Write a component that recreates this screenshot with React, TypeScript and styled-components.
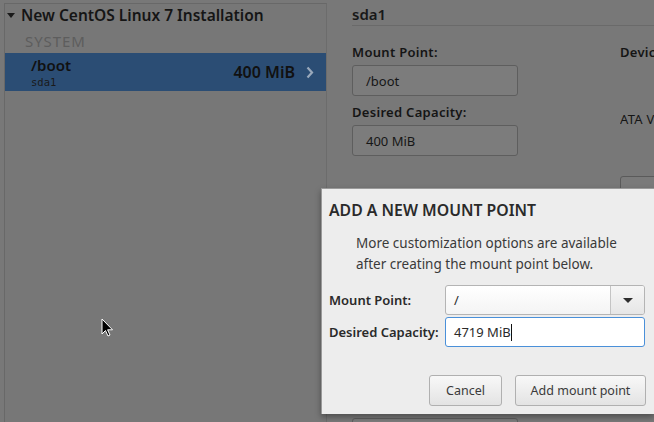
import React from "react";
import styled, { createGlobalStyle } from "styled-components";

const GlobalStyle = createGlobalStyle`
  html, body {
    margin: 0;
    padding: 0;
    background: #787878;
    overflow: hidden;
  }
  body {
    font-family: "Noto Sans", "Open Sans", sans-serif;
    color: #1c1c1c;
  }
`;

const Page = styled.div`
  position: relative;
  display: flex;
  width: 654px;
  height: 422px;
  background: #787878;
  overflow: hidden;
`;

const LeftPane = styled.div`
  flex-shrink: 0;
  width: 321px;
  margin: 3px 0 0 4px;
  border-left: 1px solid #686868;
  border-top: 1px solid #686868;
  border-right: 1px solid #6c6c6c;
  background: #777777;
  display: flex;
  flex-direction: column;
`;

const TreeHeader = styled.div`
  display: flex;
  align-items: center;
  gap: 6px;
  height: 22px;
  padding: 0 0 0 2px;
  font-size: 15.5px;
  font-weight: 600;
  color: #151515;
`;

const Caret = styled.span`
  width: 0;
  height: 0;
  border-left: 4px solid transparent;
  border-right: 4px solid transparent;
  border-top: 5px solid #1a1a1a;
`;

const SectionLabel = styled.div`
  padding: 5px 0 0 20px;
  height: 23px;
  box-sizing: border-box;
  font-size: 15px;
  color: #5d5d5d;
  letter-spacing: 0.9px;
`;

const SelectedRow = styled.div`
  display: flex;
  align-items: center;
  height: 38px;
  margin-top: 4px;
  padding: 0 12px 0 26px;
  background: #2b4d74;
`;

const RowNames = styled.div`
  flex: 1;
  display: flex;
  flex-direction: column;
`;

const RowTitle = styled.span`
  font-size: 15px;
  font-weight: 600;
  color: #111;
  line-height: 19px;
`;

const RowDevice = styled.span`
  font-family: "DejaVu Sans Mono", "Liberation Mono", monospace;
  font-size: 10.5px;
  color: #1a1a1a;
  line-height: 14px;
`;

const RowSize = styled.span`
  font-size: 16px;
  font-weight: 600;
  color: #111;
  margin-right: 11px;
`;

const RightPane = styled.div`
  flex: 1;
  min-width: 0;
  padding: 3px 0 0 25px;
  display: flex;
  flex-direction: column;
`;

const DeviceTitle = styled.div`
  font-size: 15px;
  font-weight: 600;
  color: #181818;
  height: 27px;
  border-bottom: 1px solid #6a6a6a;
  box-sizing: border-box;
  line-height: 22px;
`;

const FieldColumns = styled.div`
  display: grid;
  grid-template-columns: 268px 1fr;
  padding-top: 17px;
`;

const Column = styled.div`
  display: flex;
  flex-direction: column;
  overflow: hidden;
`;

const FieldLabel = styled.div<{ $gap?: number }>`
  font-size: 13px;
  font-weight: 600;
  color: #151515;
  height: 18px;
  line-height: 18px;
  letter-spacing: 0.3px;
  white-space: nowrap;
  margin-top: ${(p) => p.$gap ?? 0}px;
`;

const PlainText = styled.div<{ $gap?: number }>`
  font-size: 13px;
  color: #151515;
  letter-spacing: 0.3px;
  white-space: nowrap;
  margin-top: ${(p) => p.$gap ?? 0}px;
`;

const DimInput = styled.div<{ $gap?: number }>`
  width: 166px;
  height: 31px;
  margin-top: ${(p) => p.$gap ?? 4}px;
  box-sizing: border-box;
  border: 1px solid #5e5e5e;
  border-radius: 3px;
  background: #7c7c7c;
  padding: 0 13px;
  display: flex;
  align-items: center;
  font-size: 13px;
  color: #161616;
`;

const DimButton = styled.div<{ $w: number; $gap: number }>`
  width: ${(p) => p.$w}px;
  height: 30px;
  margin-top: ${(p) => p.$gap}px;
  box-sizing: border-box;
  border: 1px solid #5a5a5a;
  border-radius: 3px;
  background: #7a7a7a;
`;

const Dialog = styled.div`
  position: absolute;
  left: 321px;
  top: 188px;
  width: 333px;
  height: 226px;
  box-sizing: border-box;
  background: #ededed;
  border-left: 1px solid #9a9a9a;
  border-top: 1px solid #9a9a9a;
  box-shadow: 0 3px 6px rgba(0, 0, 0, 0.35);
  padding: 11px 8px 0 7px;
  display: flex;
  flex-direction: column;
`;

const DialogTitle = styled.div`
  font-size: 15.8px;
  font-weight: 600;
  color: #2a2a2a;
  height: 20px;
  line-height: 20px;
`;

const DialogText = styled.p`
  margin: 13px 0 0 27px;
  font-size: 13.5px;
  line-height: 21px;
  color: #3a3a3a;
`;

const FormGrid = styled.div`
  display: grid;
  grid-template-columns: 116px 200px;
  row-gap: 2px;
  align-items: center;
  margin-top: 10px;
`;

const FormLabel = styled.label`
  font-size: 13px;
  font-weight: 600;
  color: #2a2a2a;
`;

const Combo = styled.div`
  display: flex;
  height: 30px;
  box-sizing: border-box;
  border: 1px solid #b4b4b4;
  border-radius: 3px;
  background: linear-gradient(#ffffff, #f4f4f4);
  overflow: hidden;
`;

const ComboValue = styled.div`
  flex: 1;
  display: flex;
  align-items: center;
  padding-left: 8px;
  font-size: 13px;
  color: #2a2a2a;
`;

const ComboButton = styled.div`
  width: 33px;
  border-left: 1px solid #c4c4c4;
  background: linear-gradient(#f6f6f6, #e6e6e6);
  display: flex;
  align-items: center;
  justify-content: center;
`;

const DownArrow = styled.span`
  width: 0;
  height: 0;
  border-left: 5px solid transparent;
  border-right: 5px solid transparent;
  border-top: 5px solid #2e2e2e;
`;

const TextInput = styled.div`
  height: 30px;
  box-sizing: border-box;
  border: 1px solid #4a90d9;
  border-radius: 3px;
  background: #ffffff;
  display: flex;
  align-items: center;
  padding-left: 8px;
  font-size: 13px;
  color: #2a2a2a;
`;

const TextCaret = styled.span`
  display: inline-block;
  width: 1px;
  height: 17px;
  background: #111;
`;

const ButtonRow = styled.div`
  display: flex;
  justify-content: flex-end;
  gap: 13px;
  margin-top: 28px;
`;

const Button = styled.button<{ $w: number }>`
  width: ${(p) => p.$w}px;
  height: 31px;
  border: 1px solid #b0b0b0;
  border-radius: 3px;
  background: linear-gradient(#f8f8f8, #e3e3e3);
  font-family: "Noto Sans", "Open Sans", sans-serif;
  font-size: 12.5px;
  color: #3a3a3a;
  padding: 0;
`;

const Cursor = styled.svg`
  position: absolute;
  left: 101px;
  top: 318px;
`;

export default function App() {
  return (
    <>
      <GlobalStyle />
      <Page>
        <LeftPane>
          <TreeHeader>
            <Caret />
            New CentOS Linux 7 Installation
          </TreeHeader>
          <SectionLabel>SYSTEM</SectionLabel>
          <SelectedRow>
            <RowNames>
              <RowTitle>/boot</RowTitle>
              <RowDevice>sda1</RowDevice>
            </RowNames>
            <RowSize>400 MiB</RowSize>
            <svg width="8" height="13" viewBox="0 0 8 13">
              <path d="M1.5 1.5 L6 6.5 L1.5 11.5" fill="none" stroke="#9aa9bb" strokeWidth="2.2" />
            </svg>
          </SelectedRow>
        </LeftPane>
        <RightPane>
          <DeviceTitle>sda1</DeviceTitle>
          <FieldColumns>
            <Column>
              <FieldLabel>Mount Point:</FieldLabel>
              <DimInput>/boot</DimInput>
              <FieldLabel $gap={7}>Desired Capacity:</FieldLabel>
              <DimInput>400 MiB</DimInput>
              <DimInput $gap={262} />
            </Column>
            <Column>
              <FieldLabel>Devic</FieldLabel>
              <PlainText $gap={49}>ATA V</PlainText>
              <DimButton $w={40} $gap={48} />
            </Column>
          </FieldColumns>
        </RightPane>

        <Dialog>
          <DialogTitle>ADD A NEW MOUNT POINT</DialogTitle>
          <DialogText>
            More customization options are available
            <br />
            after creating the mount point below.
          </DialogText>
          <FormGrid>
            <FormLabel>Mount Point:</FormLabel>
            <Combo>
              <ComboValue>/</ComboValue>
              <ComboButton>
                <DownArrow />
              </ComboButton>
            </Combo>
            <FormLabel>Desired Capacity:</FormLabel>
            <TextInput>
              4719 MiB
              <TextCaret />
            </TextInput>
          </FormGrid>
          <ButtonRow>
            <Button $w={73}>Cancel</Button>
            <Button $w={131}>Add mount point</Button>
          </ButtonRow>
        </Dialog>

        <Cursor width="13" height="20" viewBox="0 0 13 20">
          <path
            d="M1 1 L1 16 L4.5 12.5 L7 18 L9 17 L6.6 11.8 L11.5 11.8 Z"
            fill="#000"
            stroke="#fff"
            strokeWidth="1"
            strokeLinejoin="round"
          />
        </Cursor>
      </Page>
    </>
  );
}
